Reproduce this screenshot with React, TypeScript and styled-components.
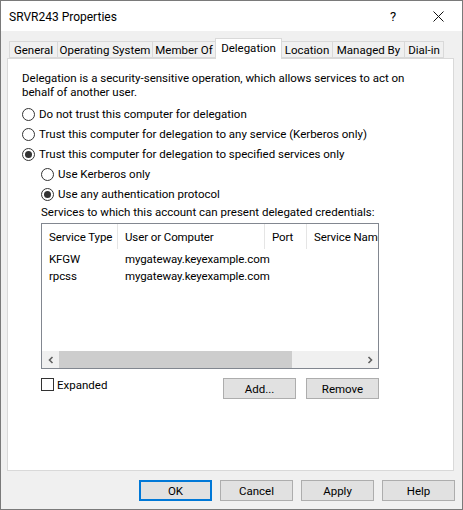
import React from "react";
import styled, { createGlobalStyle } from "styled-components";

const Global = createGlobalStyle`
  html, body { margin: 0; padding: 0; background: #ffffff; }
  body { font-family: Roboto, "Liberation Sans", Arial, sans-serif; font-size: 11.5px; color: #000; }
  * { box-sizing: border-box; }
`;

const Window = styled.div`
  width: 463px;
  height: 510px;
  border: 1px solid #7a7a7a;
  display: flex;
  flex-direction: column;
  background: #f0f0f0;
`;

const TitleBar = styled.div`
  height: 30px;
  background: #ffffff;
  display: flex;
  align-items: center;
  padding-left: 8px;
  flex-shrink: 0;
`;

const Title = styled.div`
  flex: 1;
  font-size: 12px;
  padding-top: 1px;
`;

const TitleButton = styled.div<{ $w: number }>`
  width: ${(p) => p.$w}px;
  height: 30px;
  display: flex;
  align-items: center;
  justify-content: center;
  font-size: 13px;
`;

const Body = styled.div`
  flex: 1;
  display: flex;
  flex-direction: column;
  padding: 7px 6px 0 6px;
`;

const TabStrip = styled.div`
  display: flex;
  align-items: flex-end;
  height: 20px;
  padding-left: 2px;
  position: relative;
  z-index: 2;
`;

const Tab = styled.div<{ $w: number; $active?: boolean }>`
  width: ${(p) => p.$w}px;
  height: ${(p) => (p.$active ? 21 : 17)}px;
  margin-bottom: ${(p) => (p.$active ? -1 : 0)}px;
  margin-left: -1px;
  border: 1px solid #d9d9d9;
  border-bottom: ${(p) => (p.$active ? "none" : "1px solid #d9d9d9")};
  background: ${(p) => (p.$active ? "#ffffff" : "#f0f0f0")};
  display: flex;
  align-items: center;
  justify-content: center;
  padding-bottom: ${(p) => (p.$active ? 3 : 0)}px;
  white-space: nowrap;
  position: relative;
  z-index: ${(p) => (p.$active ? 3 : 1)};
  &:first-child { margin-left: 0; }
`;

const Panel = styled.div`
  width: 447px;
  height: 413px;
  background: #ffffff;
  border: 1px solid #d9d9d9;
  padding: 12px 14px 0 14px;
  display: flex;
  flex-direction: column;
`;

const Description = styled.div`
  line-height: 14px;
  width: 400px;
  margin-bottom: 5px;
`;

const OptionRow = styled.div<{ $indent?: boolean }>`
  height: 20px;
  display: flex;
  align-items: center;
  gap: 4px;
  padding-left: ${(p) => (p.$indent ? 19 : 0)}px;
  white-space: nowrap;
`;

const Radio = styled.span<{ $checked?: boolean }>`
  width: 13px;
  height: 13px;
  border-radius: 50%;
  border: 1px solid #333333;
  background: #ffffff;
  display: inline-flex;
  align-items: center;
  justify-content: center;
  flex-shrink: 0;
  &::after {
    content: "";
    width: 7px;
    height: 7px;
    border-radius: 50%;
    background: ${(p) => (p.$checked ? "#333333" : "transparent")};
  }
`;

const Label = styled.div`
  line-height: 14px;
  padding-left: 19px;
  margin-top: 1px;
  white-space: nowrap;
`;

const ListView = styled.div`
  margin-left: 19px;
  margin-top: 4px;
  width: 338px;
  height: 146px;
  border: 1px solid #828790;
  background: #ffffff;
  display: flex;
  flex-direction: column;
  overflow: hidden;
`;

const ListBody = styled.div`
  flex: 1;
  overflow: hidden;
`;

const Row = styled.div<{ $header?: boolean }>`
  display: flex;
  height: ${(p) => (p.$header ? 25 : 17)}px;
  align-items: ${(p) => (p.$header ? "stretch" : "center")};
  margin-bottom: ${(p) => (p.$header ? 1 : 0)}px;
  white-space: nowrap;
`;

const Cell = styled.div<{ $w: number; $divider?: boolean }>`
  width: ${(p) => p.$w}px;
  flex-shrink: 0;
  padding-left: 7px;
  display: flex;
  align-items: center;
  border-right: ${(p) => (p.$divider ? "1px solid #e5e5e5" : "none")};
  overflow: visible;
  letter-spacing: -0.1px;
`;

const HScroll = styled.div`
  height: 17px;
  background: #f0f0f0;
  display: flex;
  align-items: center;
`;

const ScrollArrow = styled.div`
  width: 17px;
  height: 17px;
  display: flex;
  align-items: center;
  justify-content: center;
  flex-shrink: 0;
`;

const Track = styled.div`
  flex: 1;
  height: 17px;
  display: flex;
  align-items: stretch;
`;

const Thumb = styled.div`
  background: #cdcdcd;
`;

const BottomRow = styled.div`
  display: flex;
  align-items: flex-start;
  margin-top: 9px;
  padding-left: 19px;
`;

const CheckLabel = styled.div`
  display: flex;
  align-items: center;
  gap: 3px;
  height: 13px;
  flex: 1;
`;

const CheckBox = styled.span`
  width: 13px;
  height: 13px;
  border: 1px solid #333333;
  background: #ffffff;
  flex-shrink: 0;
`;

const Button = styled.div<{ $default?: boolean }>`
  width: 73px;
  height: 21px;
  background: #e1e1e1;
  border: ${(p) => (p.$default ? "2px solid #0078d7" : "1px solid #adadad")};
  display: flex;
  align-items: center;
  justify-content: center;
`;

const ButtonGroup = styled.div`
  display: flex;
  gap: 10px;
  margin-right: 60px;
`;

const Footer = styled.div`
  display: flex;
  justify-content: flex-end;
  gap: 8px;
  margin-top: 9px;
  padding-right: 1px;
`;

const Chevron = ({ dir }: { dir: "left" | "right" }) => (
  <svg width="8" height="8" viewBox="0 0 8 8">
    <path
      d={dir === "left" ? "M5.5 1 L2.5 4 L5.5 7" : "M2.5 1 L5.5 4 L2.5 7"}
      fill="none"
      stroke="#606060"
      strokeWidth="1.6"
    />
  </svg>
);

const tabs = [
  { name: "General", w: 49 },
  { name: "Operating System", w: 96 },
  { name: "Member Of", w: 64 },
  { name: "Delegation", w: 67, active: true },
  { name: "Location", w: 52 },
  { name: "Managed By", w: 73 },
  { name: "Dial-in", w: 40 },
];

const columns = [
  { name: "Service Type", w: 76 },
  { name: "User or Computer", w: 147 },
  { name: "Port", w: 42 },
  { name: "Service Name", w: 90 },
];

const rows = [
  ["KFGW", "mygateway.keyexample.com", "", ""],
  ["rpcss", "mygateway.keyexample.com", "", ""],
];

export default function App() {
  return (
    <>
      <Global />
      <Window>
        <TitleBar>
          <Title>SRVR243 Properties</Title>
          <TitleButton $w={42}>?</TitleButton>
          <TitleButton $w={48}>
            <svg width="11" height="11" viewBox="0 0 11 11">
              <path d="M0.5 0.5 L10.5 10.5 M10.5 0.5 L0.5 10.5" stroke="#111" strokeWidth="1" />
            </svg>
          </TitleButton>
        </TitleBar>
        <Body>
          <TabStrip>
            {tabs.map((t) => (
              <Tab key={t.name} $w={t.w} $active={t.active}>
                {t.name}
              </Tab>
            ))}
          </TabStrip>
          <Panel>
            <Description>
              Delegation is a security-sensitive operation, which allows services to act on
              <br />
              behalf of another user.
            </Description>
            <OptionRow>
              <Radio />
              Do not trust this computer for delegation
            </OptionRow>
            <OptionRow>
              <Radio />
              Trust this computer for delegation to any service (Kerberos only)
            </OptionRow>
            <OptionRow>
              <Radio $checked />
              Trust this computer for delegation to specified services only
            </OptionRow>
            <OptionRow $indent>
              <Radio />
              Use Kerberos only
            </OptionRow>
            <OptionRow $indent>
              <Radio $checked />
              Use any authentication protocol
            </OptionRow>
            <Label>Services to which this account can present delegated credentials:</Label>
            <ListView>
              <ListBody>
                <Row $header>
                  {columns.map((c, i) => (
                    <Cell key={c.name} $w={c.w} $divider={i < columns.length - 1}>
                      {c.name}
                    </Cell>
                  ))}
                </Row>
                {rows.map((r, ri) => (
                  <Row key={ri}>
                    {r.map((v, i) => (
                      <Cell key={i} $w={columns[i].w}>
                        {v}
                      </Cell>
                    ))}
                  </Row>
                ))}
              </ListBody>
              <HScroll>
                <ScrollArrow>
                  <Chevron dir="left" />
                </ScrollArrow>
                <Track>
                  <Thumb style={{ width: "77%" }} />
                </Track>
                <ScrollArrow>
                  <Chevron dir="right" />
                </ScrollArrow>
              </HScroll>
            </ListView>
            <BottomRow>
              <CheckLabel>
                <CheckBox />
                Expanded
              </CheckLabel>
              <ButtonGroup>
                <Button>Add...</Button>
                <Button>Remove</Button>
              </ButtonGroup>
            </BottomRow>
          </Panel>
          <Footer>
            <Button $default>OK</Button>
            <Button>Cancel</Button>
            <Button>Apply</Button>
            <Button>Help</Button>
          </Footer>
        </Body>
      </Window>
    </>
  );
}
